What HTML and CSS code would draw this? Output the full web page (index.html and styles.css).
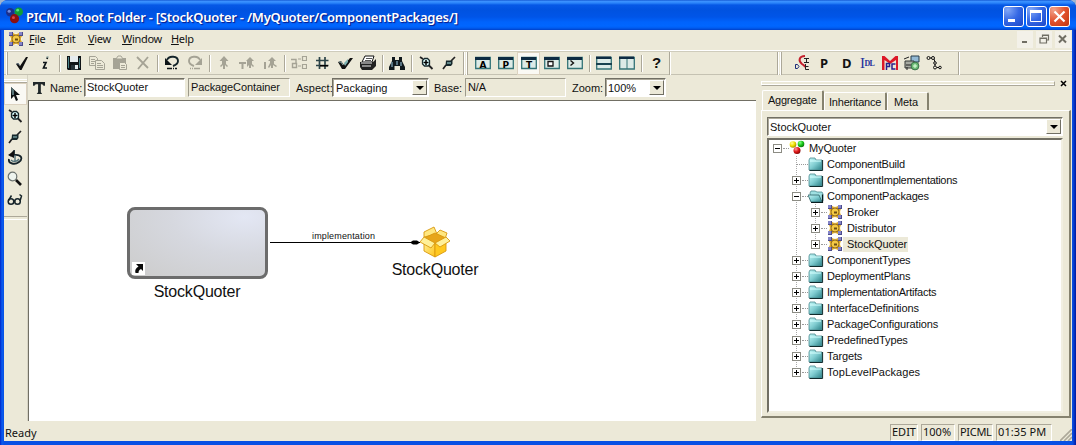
FILE: index.html
```html
<!DOCTYPE html>
<html lang="en">
<head>
<meta charset="utf-8">
<title>PICML - Root Folder</title>
<link rel="stylesheet" href="styles.css">
</head>
<body>
<svg class="defs" width="0" height="0">
  <defs>
    <linearGradient id="gFolder" x1="0" y1="0" x2="1" y2="1"><stop offset="0" stop-color="#c4f8f8"/><stop offset=".5" stop-color="#7fccd0"/><stop offset="1" stop-color="#2a7f86"/></linearGradient>
    <linearGradient id="gBox" x1="0" y1="0" x2="1" y2="1"><stop offset="0" stop-color="#fff3a0"/><stop offset="1" stop-color="#ffc31a"/></linearGradient>
    <radialGradient id="gY" cx=".35" cy=".3" r=".8"><stop offset="0" stop-color="#ffff9a"/><stop offset=".5" stop-color="#f0e000"/><stop offset="1" stop-color="#8c8000"/></radialGradient>
    <radialGradient id="gG" cx=".35" cy=".3" r=".8"><stop offset="0" stop-color="#8cff8c"/><stop offset=".5" stop-color="#18c818"/><stop offset="1" stop-color="#046004"/></radialGradient>
    <radialGradient id="gR" cx=".35" cy=".3" r=".8"><stop offset="0" stop-color="#ff9a9a"/><stop offset=".5" stop-color="#e01818"/><stop offset="1" stop-color="#700000"/></radialGradient>
  </defs>
  <symbol id="pkg" viewBox="0 0 16 16"><path d="M2 2h12v12H2z" fill="#d9a62c"/><path d="M5 2h6l-3 1.500zM5 14h6l-3-1.500zM2 5v6l1.500-3zM14 5v6l-1.500-3z" fill="#fff6d8"/><path d="M3 3l10 10M13 3L3 13" stroke="#6b4e14" stroke-width="1.400"/><circle cx="8" cy="8" r="4" fill="#f4c944" stroke="#8f6818" stroke-width=".9"/><path d="M7 7.500h3v2H7z" fill="#6b4e14"/><path d="M1 1h4v4H1zM11 1h4v4h-4zM1 11h4v4H1zM11 11h4v4h-4z" fill="#4c4c8c"/><path d="M1 1h3v3H1zM11 1h3v3h-3zM1 11h3v3H1zM11 11h3v3h-3z" fill="#8484c8"/></symbol>
  <symbol id="folder" viewBox="0 0 16 16"><path d="M1 4l1-2h5l1 2h6v10H1z" fill="url(#gFolder)" stroke="#4b8a8f" stroke-width=".8"/><path d="M2 5h11" stroke="#d5ffff"/><path d="M14.600 4v10.500H1.500" stroke="#102a2c" fill="none"/></symbol>
  <symbol id="folderOpen" viewBox="0 0 16 16"><path d="M2 5l1-2h4l2 1h5l1 2v7H3z" fill="#9fe0e2" stroke="#4b8a8f" stroke-width=".8"/><path d="M0 7h11l3 7H3z" fill="url(#gFolder)" stroke="#2b6267" stroke-width=".8"/><path d="M3 14.500h11.500V6.500" stroke="#081c1e" stroke-width="1.200" fill="none"/></symbol>
  <symbol id="check" viewBox="0 0 16 16"><path d="M2 9l2-1 2 3 6-9h2L7.500 15H6z" fill="#111"/><path d="M2.500 9l2-.5 1 2" stroke="#678" fill="none"/></symbol>
  <symbol id="info" viewBox="0 0 16 16"><path d="M10.500 2.500L10 4M6 7.500h3L6.500 13h3.500" fill="none" stroke="#0d1418" stroke-width="1.700"/><path d="M9.500 2h2" stroke="#688"/></symbol>
  <symbol id="save" viewBox="0 0 16 16"><path d="M1 1h14v14H2l-1-1z" fill="#101417"/><path d="M4 1h8v6H4z" fill="#e6ecee"/><path d="M2 2h1v11H2zM13 3h1v10h-1z" fill="#4b8287"/><path d="M5 10h7v5H5z" fill="#263238"/><path d="M9 10h3v4H9z" fill="#e6ecee"/></symbol>
  <symbol id="copy" viewBox="0 0 16 16"><g fill="#ece9d8" stroke="#a5a395"><path d="M.5 1.500h6l2 2v7h-8z"/><path d="M2 4.500h4M2 6.500h4M2 8.500h3"/><path d="M6.500 5.500h6l3 3v6h-9z"/><path d="M8 8.500h4M8 10.500h6M8 12.500h6"/></g></symbol>
  <symbol id="paste" viewBox="0 0 16 16"><path d="M1 3h13v11H1z" fill="#a5a395"/><path d="M4 4l2-3h3l2 3z" fill="#ece9d8" stroke="#a5a395"/><path d="M7.500 7.500h5l2 2v5h-7z" fill="#ece9d8" stroke="#a5a395"/><path d="M9 10.500h4M9 12.500h4" stroke="#a5a395"/></symbol>
  <symbol id="cross" viewBox="0 0 16 16"><path d="M2 2l11 11M13 2L3 14" stroke="#a5a395" stroke-width="1.800" fill="none"/></symbol>
  <symbol id="undo" viewBox="0 0 16 16"><path d="M3 5c2-5 11-4 11 1 0 3-2 4-5 5" fill="none" stroke="#14242a" stroke-width="1.900"/><path d="M1 3v7h7z" fill="#0d1418"/><path d="M3 13.500h10" stroke="#0d1418" stroke-width="1.500" stroke-dasharray="5 1 1 1"/></symbol>
  <symbol id="redo" viewBox="0 0 16 16"><path d="M13 5C11 0 2 1 2 6c0 3 2 4 5 5" fill="none" stroke="#a5a395" stroke-width="1.900"/><path d="M15 3v7H8z" fill="#a5a395"/><path d="M3 13.500h10" stroke="#a5a395" stroke-width="1.500" stroke-dasharray="1 1 1 1 6"/></symbol>
  <symbol id="up" viewBox="0 0 16 16"><path d="M8 1l4.500 5H10v3l2 2-1 1-2-2v4H7v-4l-2 2-1-1 2-2V6H3.500z" fill="#a5a395"/></symbol>
  <symbol id="tup" viewBox="0 0 16 16"><path d="M0 7h7v2H4.500v5h-2V9H0zM11 2l4 4h-2v3l2 2-1 1-2-2v3h-2v-3l-2 2V6H7z" fill="#a5a395"/></symbol>
  <symbol id="iup" viewBox="0 0 16 16"><path d="M2 7h2v7H2zM10 2l4 4h-2v3l3 2-1 1-3-2v3H9v-3l-2 3-1-1 2-4V6H6z" fill="#a5a395"/></symbol>
  <symbol id="tree3" viewBox="0 0 16 16"><g fill="none" stroke="#a5a395"><path d="M0 4.500h5v4M1.500 8.500h4v4h-4z" stroke-width="1.400"/><path d="M11.500 1.500h4v4h-4zM11.500 9.500h4v4h-4zM7 4h3M7 11h3" stroke-width="1.200"/></g></symbol>
  <symbol id="grid" viewBox="0 0 16 16"><path d="M5.500 2v12M11 2v12M2 5.500h12.500M2 10.500h12.500" stroke="#2c4448" stroke-width="1.700"/><path d="M6 10h8v1.500H6z" fill="#000"/></symbol>
  <symbol id="dcheck" viewBox="0 0 16 16"><path d="M1 7l3-1 3 4 6-7h3L8 14H5z" fill="#111"/><path d="M7 8l4-4v3L8 11z" fill="#7cb0b0"/><path d="M2 7l2 0 2 3" stroke="#8aa" fill="none"/></symbol>
  <symbol id="print" viewBox="0 0 16 16"><path d="M5 1h9l-2 6H2z" fill="#fff" stroke="#111"/><path d="M6 3.500h6M5 5.500h6" stroke="#555"/><path d="M0 7h13l3-3v7l-4 4H2l-2-3z" fill="#222"/><path d="M1 8h11M2 11h9" stroke="#eee"/></symbol>
  <symbol id="binoc" viewBox="0 0 16 16"><path d="M3 2h3v3h4V2h3v4l3 6v3h-5v-4H5.500v4H0v-3l3-6z" fill="#10181c"/><path d="M3 7v5M8 6v4M12 7v4" stroke="#7698aa" stroke-width="1.400"/></symbol>
  <symbol id="zin" viewBox="0 0 16 16"><path d="M2 2l3 2M10.500 10l4 4" stroke="#222" stroke-width="1.800"/><path d="M4.500 5.500l2-2h3l2 2v4l-1.500 1.500H6.500l-2-2z" fill="#dff" stroke="#16282c" stroke-width="1.300"/><path d="M8 5v5M5.500 7.500h5" stroke="#000" stroke-width="1.500"/></symbol>
  <symbol id="zout" viewBox="0 0 16 16"><path d="M14 2l-4 4M5 10l-3 4" stroke="#222" stroke-width="1.700"/><path d="M5 5.500h6.500V9L10 11H4.500z" fill="#16282c"/><path d="M6 8h4" stroke="#9cc" stroke-width="1.200"/></symbol>
  <symbol id="win" viewBox="0 0 16 16"><path d="M.7 2.500h14.600v11H.7z" fill="#ddebe7" stroke="#347477" stroke-width="1.300"/><path d="M0 2h15v3H0z" fill="#0d2b42"/></symbol>
  <symbol id="winPlain" viewBox="0 0 16 16"><path d="M.7 2.500h14.600v11.500H.7z" fill="#ddebe7" stroke="#347477" stroke-width="1.300"/><path d="M0 1.500h15v2.500H0z" fill="#0d2b42"/></symbol>
  <symbol id="cie" viewBox="0 0 16 16"><path d="M11 1C5 1 4 6 8 9c3 2 3 3 4 3" fill="none" stroke="#c4202c" stroke-width="2"/><path d="M10 3.500h5M12.500 3.500v4M10 7.500h5M11.500 9v5.500h3.500M11.500 11.500h3" stroke="#222" fill="none"/><path d="M1.500 9.500v4h2l1.500-2-1.500-2z" fill="none" stroke="#1b2c78"/></symbol>
  <symbol id="mpc" viewBox="0 0 16 16"><path d="M0 15V1h2.500L8 6l5.500-5H16v14h-2V5L8 9 2.500 5v10z" fill="#dc1828"/><path d="M4.500 15V8.500h3v3H5M13.500 9H10v5h3.500" fill="none" stroke="#28208c" stroke-width="1.500"/></symbol>
  <symbol id="deploy" viewBox="0 0 16 16"><path d="M7 1h8v6H7z" fill="#92b9d4" stroke="#263c4b"/><path d="M1 6h9v7H1z" fill="#a7aaa2" stroke="#343936"/><path d="M0 4l5-2M2 10h7M3 12v3" stroke="#222"/><circle cx="11" cy="11" r="3.900" fill="#6fbd77" stroke="#3a704a"/><path d="M9 11h4M11 9v4" stroke="#e1ffe1"/></symbol>
  <symbol id="graph" viewBox="0 0 16 16"><g fill="none" stroke="#111"><circle cx="2.500" cy="3" r="1.500"/><circle cx="7" cy="3" r="1.500"/><circle cx="9" cy="8" r="1.300"/><circle cx="9" cy="12.500" r="1.500"/><circle cx="14" cy="12.500" r="1.300"/><path d="M4 3h1.500M8 4l1 3M9 9v2M11 12.500h2"/></g></symbol>
  <symbol id="balls" viewBox="0 0 16 16"><circle cx="4" cy="4.500" r="3.300" fill="url(#gY)"/><circle cx="12" cy="4" r="3.300" fill="url(#gG)"/><circle cx="8" cy="10.500" r="3.500" fill="url(#gR)"/></symbol>
  <symbol id="cursor" viewBox="0 0 16 16"><path d="M4 1v12l3-3 2 5 2-1-2-5h4z" fill="#0c1012"/><path d="M4 1l3 3v5H5z" fill="#587478"/></symbol>
</svg>

<div class="window">
  <header class="titlebar">
    <svg class="app" viewBox="0 0 16 16"><circle cx="4" cy="5" r="4" fill="#1b2f8c"/><circle cx="12" cy="4.500" r="4" fill="#109c38"/><circle cx="8" cy="11" r="4.300" fill="#8c1010"/><circle cx="3" cy="4" r="1.500" fill="#6f8be0"/><circle cx="11" cy="3" r="1.300" fill="#58e080"/><circle cx="7" cy="10" r="1.400" fill="#e04848"/></svg>
    <h1>PICML - Root Folder - [StockQuoter - /MyQuoter/ComponentPackages/]</h1>
    <div class="caption">
      <span class="cap"><svg viewBox="0 0 19 19"><path d="M4 12h7v3H4z" fill="#fff"/></svg></span>
      <span class="cap"><svg viewBox="0 0 19 19"><path d="M3.500 4v10.500h11V4" fill="none" stroke="#fff"/><path d="M3 3h12v3H3z" fill="#fff"/></svg></span>
      <span class="cap close"><svg viewBox="0 0 19 19"><path d="M4.500 4.500l10 10M14.500 4.500l-10 10" stroke="#fff" stroke-width="2.200"/></svg></span>
    </div>
  </header>

  <div class="client">
    <nav class="menubar">
      <svg class="ic"><use href="#pkg"/></svg>
      <span class="m1"><u>F</u>ile</span><span class="m2"><u>E</u>dit</span><span class="m3"><u>V</u>iew</span><span class="m4"><u>W</u>indow</span><span class="m5"><u>H</u>elp</span>
      <div class="mdi">
        <b><svg viewBox="0 0 14 14"><path d="M4 10h5" stroke="#706e64" stroke-width="2"/></svg></b>
        <b><svg viewBox="0 0 14 14"><path d="M5.500 5V3h6v5H10M3 6h6.500v5H3zM3 6.500h6.500M5.500 3.500h6" fill="none" stroke="#706e64" stroke-width="1.200"/></svg></b>
        <b><svg viewBox="0 0 14 14"><path d="M3 3.500l7 7M10 3.500l-7 7" stroke="#706e64" stroke-width="2"/></svg></b>
      </div>
    </nav>

    <div class="toolbars">
      <div class="tb tb1">
        <i><svg class="ic"><use href="#check"/></svg></i><i><svg class="ic"><use href="#info"/></svg></i><s></s>
        <i><svg class="ic"><use href="#save"/></svg></i><i><svg class="ic"><use href="#copy"/></svg></i><i><svg class="ic"><use href="#paste"/></svg></i><i><svg class="ic"><use href="#cross"/></svg></i><s></s>
        <i><svg class="ic"><use href="#undo"/></svg></i><i><svg class="ic"><use href="#redo"/></svg></i><s></s>
        <i><svg class="ic"><use href="#up"/></svg></i><i><svg class="ic"><use href="#tup"/></svg></i><i><svg class="ic"><use href="#iup"/></svg></i><s></s>
        <i><svg class="ic"><use href="#tree3"/></svg></i><i><svg class="ic"><use href="#grid"/></svg></i><i><svg class="ic"><use href="#dcheck"/></svg></i><i><svg class="ic"><use href="#print"/></svg></i><s></s>
        <i><svg class="ic"><use href="#binoc"/></svg></i><s></s>
        <i><svg class="ic"><use href="#zin"/></svg></i><i><svg class="ic"><use href="#zout"/></svg></i>
      </div>
      <div class="tb tb2">
        <i><svg class="ic"><use href="#win"/><text class="wt" x="4.500" y="12.500">A</text></svg></i><i><svg class="ic"><use href="#win"/><text class="wt" x="4.500" y="12.500">P</text></svg></i><i class="on"><svg class="ic"><use href="#win"/><text class="wt" x="5" y="12.500">T</text></svg></i><i><svg class="ic"><use href="#win"/><path d="M4 6.500h5v4.500H4z" fill="#fff" stroke="#111" stroke-width="1.300"/></svg></i><i><svg class="ic"><use href="#win"/><path d="M3.500 5.500l3 2.500-3 2.500" fill="none" stroke="#111" stroke-width="1.400"/></svg></i><s></s>
        <i><svg class="ic"><use href="#winPlain"/><path d="M0 8h16v2H0z" fill="#18424f"/></svg></i><i><svg class="ic"><use href="#winPlain"/><path d="M8 4v10" stroke="#347477"/></svg></i><s></s>
        <i><span class="q">?</span></i>
      </div>
      <div class="tb tb3"></div>
      <div class="tb tb4">
        <i><svg class="ic"><use href="#cie"/></svg></i><i class="letter">P</i><i class="letter">D</i><i class="idl">I<small>DL</small></i><i><svg class="ic"><use href="#mpc"/></svg></i><i><svg class="ic"><use href="#deploy"/></svg></i><i><svg class="ic"><use href="#graph"/></svg></i>
      </div>
    </div>

    <div class="body">
      <aside class="tools">
        <div class="hgrip"></div>
        <i class="on"><svg class="ic"><use href="#cursor"/></svg></i>
        <i><svg class="ic"><use href="#zin"/></svg></i>
        <i><svg class="ic"><use href="#zout"/></svg></i>
        <i><svg class="ic" viewBox="0 0 16 16"><path d="M3 6l4-5v4c8-1 9 4 5 7s-11 2-10-3" fill="none" stroke="#16242a" stroke-width="1.800"/><path d="M1 5l6-4v7z" fill="#111"/><path d="M4 10c2 2 6 2 8-1M8 5v6" stroke="#507078" stroke-width="1.400" fill="none"/></svg></i>
        <i><svg class="ic" viewBox="0 0 16 16"><circle cx="5.500" cy="5.500" r="4.300" fill="#eef4ee" stroke="#6d7470" stroke-width="1.200"/><path d="M9 9l5 5" stroke="#111" stroke-width="2.600"/></svg></i>
        <i><svg class="ic" viewBox="0 0 16 16"><g fill="none" stroke="#16242a" stroke-width="1.500"><circle cx="4" cy="9.500" r="2.800"/><circle cx="10.500" cy="9.500" r="2.800"/><path d="M1.500 8.500L4.500 3.500M13 9l1.500-5-2-1.500M6.500 9h2"/></g></svg></i>
      </aside>

      <main class="editor">
        <div class="namebar">
          <svg class="tee" viewBox="0 0 13 13"><path d="M0 0h13v4h-1.500L10 2.500H8.500V11l1.500 2H4l1.500-2V2.500H3L1.500 4H0z" fill="#20282a"/></svg>
          <label class="l1">Name:</label><span class="field f1">StockQuoter</span>
          <span class="field gray f2">PackageContainer</span>
          <label class="l2">Aspect:</label><span class="field combo f3">Packaging<em></em></span>
          <label class="l3">Base:</label><span class="field gray f4">N/A</span>
          <label class="l4">Zoom:</label><span class="field combo f5">100%<em></em></span>
        </div>
        <div class="canvas">
          <div class="node">
            <svg class="link" viewBox="0 0 13 13"><path d="M0 0h13v13H0z" fill="#fff"/><path d="M4 2h7v7L9 7C7 8 6.500 9 6.500 11H3.500C2.500 8 4 6 6.500 4.500z" fill="#0a0a0a"/></svg>
          </div>
          <div class="nlabel n1">StockQuoter</div>
          <div class="wirelabel">implementation</div>
          <svg class="wire" viewBox="0 0 152 9"><path d="M0 4.500h150" stroke="#000"/><path d="M140 4.500l3-2h4l3 2-3 2h-4z"/></svg>
          <svg class="box" viewBox="0 0 32 32"><g stroke="#d9980f" stroke-width=".9" stroke-linejoin="round"><path d="M5 11L5 6l10-5 3 7zM17 8l4-4 7 3-2 6z" fill="#ffe780"/><path d="M5 12l11-5 11 5-11 6z" fill="#e7a51a"/><path d="M5 13l11 5v13L5 25z" fill="url(#gBox)"/><path d="M27 13l-11 5v13l11-6z" fill="#ffc81f"/><path d="M5 11l11 6-4 5-11-6zM27 11l-11 6 5 4 10-6z" fill="#fff09a"/></g></svg>
          <div class="nlabel n2">StockQuoter</div>
        </div>
      </main>

      <section class="panel">
        <div class="panelhead"><div class="bar"></div><svg viewBox="0 0 7 7"><path d="M1 1l5 5M6 1L1 6" stroke="#000" stroke-width="1.500"/></svg></div>
        <div class="tabs"><span class="tab active">Aggregate</span><span class="tab t2">Inheritance</span><span class="tab t3">Meta</span></div>
        <div class="page">
          <div class="field combo wide">StockQuoter<em></em></div>
          <div class="treebox">
            <div class="row"><b class="pm"></b><svg class="ic"><use href="#balls"/></svg><span class="root">MyQuoter</span></div>
            <ul class="tree">
              <li class="row"><b class="none"></b><svg class="ic"><use href="#folder"/></svg><span class="tight">ComponentBuild</span></li>
              <li class="row"><b class="pm plus"></b><svg class="ic"><use href="#folder"/></svg><span class="tighter">ComponentImplementations</span></li>
              <li class="row"><b class="pm"></b><svg class="ic"><use href="#folderOpen"/></svg><span class="semi">ComponentPackages</span></li>
              <li>
                <ul class="tree sub">
                  <li class="row"><b class="pm plus"></b><svg class="ic"><use href="#pkg"/></svg><span>Broker</span></li>
                  <li class="row"><b class="pm plus"></b><svg class="ic"><use href="#pkg"/></svg><span>Distributor</span></li>
                  <li class="row"><b class="pm plus"></b><svg class="ic"><use href="#pkg"/></svg><span class="sel">StockQuoter</span></li>
                </ul>
              </li>
              <li class="row"><b class="pm plus"></b><svg class="ic"><use href="#folder"/></svg><span class="semi">ComponentTypes</span></li>
              <li class="row"><b class="pm plus"></b><svg class="ic"><use href="#folder"/></svg><span class="semi">DeploymentPlans</span></li>
              <li class="row"><b class="pm plus"></b><svg class="ic"><use href="#folder"/></svg><span class="tight">ImplementationArtifacts</span></li>
              <li class="row"><b class="pm plus"></b><svg class="ic"><use href="#folder"/></svg><span>InterfaceDefinitions</span></li>
              <li class="row"><b class="pm plus"></b><svg class="ic"><use href="#folder"/></svg><span>PackageConfigurations</span></li>
              <li class="row"><b class="pm plus"></b><svg class="ic"><use href="#folder"/></svg><span>PredefinedTypes</span></li>
              <li class="row"><b class="pm plus"></b><svg class="ic"><use href="#folder"/></svg><span>Targets</span></li>
              <li class="row"><b class="pm plus"></b><svg class="ic"><use href="#folder"/></svg><span class="wide-text">TopLevelPackages</span></li>
            </ul>
          </div>
        </div>
      </section>
    </div>

    <footer class="status">
      <span class="ready">Ready</span>
      <span class="cell c1">EDIT</span><span class="cell c2">100%</span><span class="cell c3">PICML</span><span class="cell c4">01:35 PM</span>
      <svg class="sizer" viewBox="0 0 12 12"><path d="M0 12L12 0M4 12l8-8M8 12l4-4" stroke="#aca899" stroke-width="1.600"/></svg>
    </footer>
  </div>
</div>
</body>
</html>
```
FILE: styles.css
```css
* { box-sizing: border-box; }
body { margin: 0; width: 1076px; height: 445px; overflow: hidden; background: #9fb4cf; font: 11px/14px "Liberation Sans", Arial, sans-serif; color: #111; }
i, em, b, s { font-style: normal; text-decoration: none; }
svg { display: block; flex: none; }
.defs { position: absolute; }
.ic { width: 16px; height: 16px; }

.window { width: 1076px; height: 445px; display: flex; flex-direction: column; background: linear-gradient(90deg, #0024c8 0, #0a5cf0 2px, #0850e4 4px, #0850e4 1072px, #0a48dc 1073px, #0018a0 1076px); border-radius: 8px 8px 0 0; overflow: hidden; }
.titlebar { height: 30px; flex: none; display: flex; align-items: center; padding: 0 6px; background: linear-gradient(#0848c8 0, #3f94ff 1px, #2a84fa 3px, #0658e6 5px, #0052e0 10px, #0055e8 17px, #0063fc 22px, #0066ff 26px, #005cf0 28px, #0040c8 30px); }
.app { width: 17px; height: 17px; }
h1 { margin: 3px 0 0 3px; font: 600 13px/18px "Noto Sans", sans-serif; letter-spacing: -.25px; color: #fff; text-shadow: 1px 1px 1px #0a1883; white-space: nowrap; }
.caption { margin: 3px 0 0 auto; display: flex; gap: 2px; }
.cap { width: 21px; height: 21px; border: 1px solid #fff; border-radius: 3px; background: radial-gradient(circle at 20% 15%, #83a8f7, #3467e4 50%, #1c47c8); }
.cap.close { background: radial-gradient(circle at 20% 15%, #f2a28a, #e2532f 50%, #c0350e); }
.cap svg { width: 19px; height: 19px; }

.client { margin: 0 4px 4px; flex: 1; min-height: 0; display: flex; flex-direction: column; background: #ece9d8; }
.menubar { height: 20px; flex: none; display: flex; align-items: center; padding: 0 0 2px 4px; font: 11px/14px "Noto Sans", sans-serif; }
.menubar span { white-space: nowrap; }
.m1 { width: 28px; margin-left: 5px; } .m2 { width: 31px; } .m3 { width: 34px; } .m4 { width: 49px; } .m5 { width: 30px; }
.m1, .m2, .m3, .m4, .m5 { letter-spacing: -.3px; }
.mdi { margin-left: auto; display: flex; gap: 3px; padding-right: 1px; }
.mdi b { width: 16px; height: 17px; background: #f3f1e9; padding: 1px; }
.mdi svg { width: 14px; height: 14px; }

.toolbars { height: 25px; flex: none; display: flex; border-top: 1px solid #fff; box-shadow: inset 0 1px #cfccbc; border-bottom: 1px solid #c5c2b2; }
.tb { display: flex; align-items: center; border-right: 1px solid #aca899; box-shadow: 1px 0 #fff; height: 23px; margin-top: 1px; }
.tb i { width: 23px; height: 23px; padding: 3px 0 0 4px; flex: none; }
.tb s { width: 6px; height: 17px; flex: none; background: linear-gradient(90deg, transparent 3px, #aca899 3px, #aca899 4px, #fff 4px, #fff 5px, transparent 5px); }
.tb1 { width: 460px; padding-left: 6px; }
.tb2 { width: 206px; padding-left: 7px; }
.tb3 { width: 108px; }
.tb4 { width: 181px; padding-left: 12px; }
.tb1, .tb2, .tb4 { background: linear-gradient(90deg, transparent 2px, #fff 2px, #fff 3px, #aca899 3px, #aca899 4px, transparent 4px); }
.tb4 i { width: 22px; }
.on { background: #faf9f4; border: 1px solid #dcd2c0; }
.tb .on { padding: 2px 0 0 3px; }
.wt { font: bold 9px "DejaVu Sans", sans-serif; fill: #000; }
.q { font: bold 15px/15px "Liberation Sans", sans-serif; padding-left: 4px; }
.tb .letter { font: bold 13px/16px "Noto Sans", sans-serif; padding-left: 8px; }
.tb .idl { font: 15px/16px "Liberation Serif", serif; color: #25309c; white-space: nowrap; padding-left: 4px; letter-spacing: -.5px; }
.idl small { font: bold 8px/7px "Liberation Serif", serif; letter-spacing: -.8px; vertical-align: 2px; }

.body { flex: 1; min-height: 0; display: flex; }
.tools { width: 24px; flex: none; padding-top: 4px; border-right: 1px solid #d6d3c4; }
.hgrip { height: 3px; border: solid #fff; border-width: 1px 0; box-shadow: 0 1px #aca899; margin-bottom: 1px; }
.tools i { display: block; height: 21px; padding: 3px 0 0 3px; }
.tools .on { height: 22px; padding: 2px; }
.tools::after { content: ""; display: block; height: 2px; margin-top: 6px; border-top: 1px solid #aca899; border-bottom: 1px solid #fff; }
.editor { width: 728px; flex: none; display: flex; flex-direction: column; }
.namebar { height: 25px; display: flex; align-items: center; padding-left: 5px; }
.tee { width: 12px; height: 12px; }
.namebar label { white-space: nowrap; padding-top: 1px; }
.l1 { width: 34px; margin-left: 5px; }
.l2 { width: 36px; margin-left: 6px; } .l3 { width: 31px; margin-left: 5px; } .l4 { width: 33px; margin-left: 6px; }
.field { height: 19px; flex: none; display: flex; align-items: center; padding: 0 0 1px 2px; background: #fff; border: 1px solid; border-color: #716f64 #fff #fff #716f64; box-shadow: inset 1px 1px #aca899; white-space: nowrap; }
.gray { background: #ece9d8; box-shadow: none; border-color: #9d9a8b #fff #fff #9d9a8b; letter-spacing: -.1px; }
.f1 { width: 101px; } .f2 { width: 102px; margin-left: 3px; } .f3 { width: 97px; padding-left: 3px; } .f4 { width: 101px; } .f5 { width: 61px; }
.combo { padding-bottom: 0; }
.combo em { width: 15px; height: 15px; margin: 0 1px 0 auto; background: #ece9d8; border: 1px solid; border-color: #fff #716f64 #716f64 #fff; display: flex; align-items: center; justify-content: center; }
.combo em::after { content: ""; border: 4px solid transparent; border-top-color: #000; border-bottom: 0; }

.canvas { flex: 1; position: relative; background: #fff; border-left: 1px solid #716f64; border-top: 1px solid #716f64; }
.node { position: absolute; left: 98px; top: 106px; width: 141px; height: 72px; border: 3px solid #6c6c6c; border-radius: 8px; background: radial-gradient(ellipse at 85% 10%, #e3e7f4, #d6d8df 45%, #cdcdcd 95%); }
.link { position: absolute; left: 2px; bottom: 1px; width: 13px; height: 13px; }
.nlabel { position: absolute; font-size: 16px; line-height: 20px; width: 100px; text-align: center; letter-spacing: -.2px; }
.n1 { left: 118px; top: 181px; } .n2 { left: 356px; top: 159px; }
.wirelabel { position: absolute; left: 283px; top: 128px; font: 9px/14px "Liberation Sans", sans-serif; letter-spacing: .15px; }
.wire { position: absolute; left: 241px; top: 137px; width: 152px; height: 9px; }
.box { position: absolute; left: 390px; top: 125px; width: 32px; height: 32px; }

.panel { flex: 1; padding: 4px 1px 3px 5px; display: flex; flex-direction: column; }
.panelhead { height: 9px; display: flex; align-items: center; gap: 5px; }
.bar { width: 294px; height: 5px; border: 1px solid #fff; border-right-color: #aca899; border-bottom-color: #aca899; box-shadow: inset 0 -1px #fff; }
.panelhead svg { width: 7px; height: 7px; }
.tabs { height: 22px; display: flex; align-items: flex-end; padding-left: 1px; }
.tab { height: 18px; padding: 2px 0 0 4px; border: 1px solid #fff; border-bottom: 0; border-right: 2px solid #85826f; border-radius: 2px 2px 0 0; width: 63px; white-space: nowrap; letter-spacing: -.2px; }
.active { height: 20px; padding-top: 2px; padding-left: 5px; width: 62px; letter-spacing: -.25px; }
.t3 { width: 42px; padding-left: 6px; letter-spacing: -.1px; }
.page { flex: 1; padding: 6px 6px 3px 5px; border: 1px solid #fff; border-right: 2px solid #85826f; border-bottom: 2px solid #85826f; display: flex; flex-direction: column; gap: 2px; }
.wide { height: 19px; }
.treebox { flex: 1; background: #fff; border: 2px solid; border-color: #716f64 #f1efe2 #f1efe2 #716f64; padding-left: 4px; }
.tree { list-style: none; margin: 0; padding: 0 0 0 19px; background: repeating-linear-gradient(#aaa 0 1px, transparent 1px 2px) 23px 0 / 1px calc(100% - 8px) no-repeat; }
.row { display: flex; align-items: center; height: 16px; letter-spacing: -.12px; }
.row span { line-height: 15px; padding: 0 1px 0 3px; white-space: nowrap; }
.row .semi { letter-spacing: -.2px; }
.row .tight { letter-spacing: -.25px; }
.row .tighter { letter-spacing: -.31px; }
.row .wide-text { letter-spacing: .05px; }
.sub .row span { padding-left: 4px; letter-spacing: -.1px; }
.pm { width: 9px; height: 9px; border: 1px solid #8c8c84; background: linear-gradient(#000, #000) center / 5px 1px no-repeat #fff; }
.plus { background: linear-gradient(#000, #000) center / 5px 1px no-repeat, linear-gradient(#000, #000) center / 1px 5px no-repeat #fff; }
.none { width: 9px; height: 9px; }
.row > b { flex: none; margin-right: 7px; position: relative; }
.row > b::after { content: ""; position: absolute; left: 9px; top: 3px; width: 6px; border-top: 1px dotted #999; }
.row > .none::after { left: 4px; top: 4px; width: 12px; }
.row .root { padding-left: 4px; }
.row .sel { background: #ece9d8; }

.status { height: 20px; flex: none; display: flex; align-items: center; font: 11px/14px "Noto Sans", sans-serif; padding-top: 3px; }
.ready { margin-left: 1px; margin-right: auto; }
.cell { height: 17px; border: 1px solid; border-color: #aca899 #fff #fff #aca899; padding-left: 1px; margin-right: 3px; white-space: nowrap; }
.c1 { width: 28px; } .c2 { width: 34px; } .c3 { width: 35px; letter-spacing: -.3px; } .c4 { width: 56px; margin-right: 8px; letter-spacing: .1px; }
.sizer { width: 12px; height: 12px; align-self: flex-end; }
```
